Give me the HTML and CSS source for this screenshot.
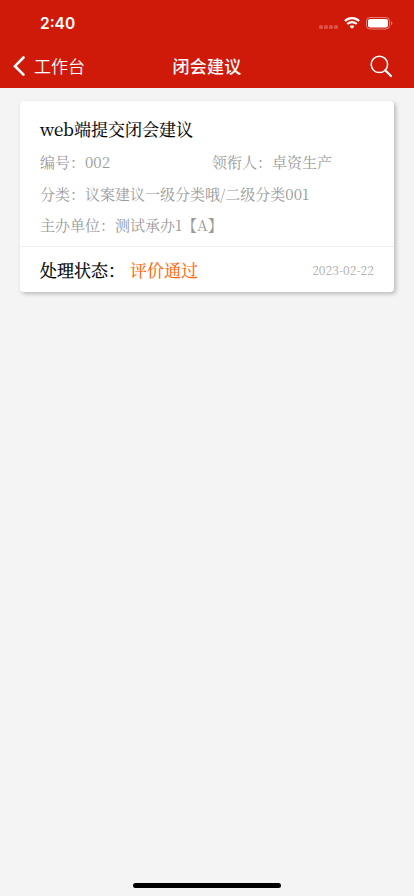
FILE: index.html
```html
<!DOCTYPE html>
<html lang="zh-CN"><head><meta charset="utf-8"><title>闭会建议</title><link rel="stylesheet" href="styles.css"></head>
<body>
<header class="top">
<div class="status"><span class="time">2:40</span><div class="signals">
<div class="dots"><i></i><i></i><i></i><i></i></div>
<svg class="wifi" width="16" height="12" viewBox="0 0 16 12" fill="none" stroke="#fff" stroke-width="2.200"><path d="M.9 4a10.200 10.200 0 0 1 14.200 0M3.300 7a6.700 6.700 0 0 1 9.400 0"/><path d="M8 11.800 5.600 9.400a3.500 3.500 0 0 1 4.800 0z" fill="#fff" stroke="none"/></svg>
<svg class="battery" width="27" height="13" viewBox="0 0 27 13"><rect x=".5" y=".5" width="23" height="11.500" rx="3.400" fill="none" stroke="#fff" stroke-opacity=".45"/><rect x="2" y="2" width="20" height="8.500" rx="2" fill="#fff"/><path d="M25 4.200v4c.8-.3 1.300-1.100 1.300-2s-.5-1.700-1.300-2z" fill="#fff" fill-opacity=".5"/></svg>
</div></div>
<nav class="nav"><a class="back"><svg width="14" height="22" viewBox="0 0 14 22"><path d="M11.500 2.500 3 11.200l8.500 8.500" fill="none" stroke="#fff" stroke-width="2.600" stroke-linecap="round"/></svg><span>工作台</span></a><h1>闭会建议</h1>
<svg class="search" width="24" height="24" viewBox="0 0 24 24" fill="none" stroke="#fff" stroke-width="1.500"><circle cx="10.400" cy="10.400" r="8.200"/><path d="m16.200 16.200 5.800 5.800" stroke-width="2.200" stroke-linecap="round"/></svg></nav>
</header>
<main><article class="card"><div class="body"><h2>web端提交闭会建议</h2>
<div class="row two"><span>编号：002</span><span>领衔人：卓资生产</span></div>
<div class="row">分类：议案建议一级分类哦/二级分类001</div>
<div class="row">主办单位：测试承办1【A】</div></div>
<footer><span class="label">处理状态：</span><span class="state">评价通过</span><time>2023-02-22</time></footer></article></main>
<div class="home"></div>
</body></html>
```
FILE: styles.css
```css
* { box-sizing: border-box; }
body { margin: 0; height: 896px; display: flex; flex-direction: column; background: #f4f4f4; font-family: "Noto Serif CJK SC", "Liberation Serif", "Noto Sans CJK SC", serif; }
.top { height: 88px; background: #cf1a0a; color: #fff; font-family: "Inter", "Noto Sans CJK SC", sans-serif; }
.status { height: 44px; display: flex; justify-content: space-between; padding: 0 21px 0 40px; align-items: center; }
.time { font-size: 15.500px; font-weight: 600; padding-top: 2px; }
.signals { display: flex; align-items: center; padding-top: 2px; }
.dots { display: flex; gap: 1px; margin-right: 6px; padding-top: 8px; }
.dots i { width: 4px; height: 4px; border-radius: 1.500px; background: #fff; opacity: .25; }
.wifi { margin-right: 6px; }
.nav { height: 44px; display: grid; grid-template-columns: 1fr auto 1fr; align-items: center; padding: 0 21px 0 12px; }
.back { display: flex; align-items: center; gap: 8px; font-size: 17px; font-weight: 350; }
.back span { margin-top: -1px; }
h1 { font-size: 17px; font-weight: 500; letter-spacing: .2px; margin: -1px -5px 0 4px; }
.search { justify-self: end; }
main { padding: 13px 20px; flex: 1; }
.card { background: #fff; border-radius: 4px; height: 191px; box-shadow: 2px 2px 4px rgba(0,0,0,.24); }
.body { height: 145px; padding: 12px 20px 0; }
h2 { margin: 0 0 1px; font-size: 17px; line-height: 32px; font-weight: 400; color: #000; -webkit-text-stroke: .15px; }
.row { font-size: 15px; line-height: 31.500px; height: 31.500px; color: #999; white-space: nowrap; }
.two { display: grid; grid-template-columns: 172px 1fr; }
footer { height: 46px; border-top: 1px solid #eee; display: flex; align-items: center; padding: 0 20px; font-size: 17px; }
.label { width: 90px; white-space: nowrap; color: #000; -webkit-text-stroke: .25px; }
.state { color: #f60; -webkit-text-stroke: .15px; }
time { margin-left: auto; color: #aaa; font-size: 12px; }
.home { width: 148px; height: 5px; border-radius: 3px; background: #000; margin: 0 auto 8px; }
```
